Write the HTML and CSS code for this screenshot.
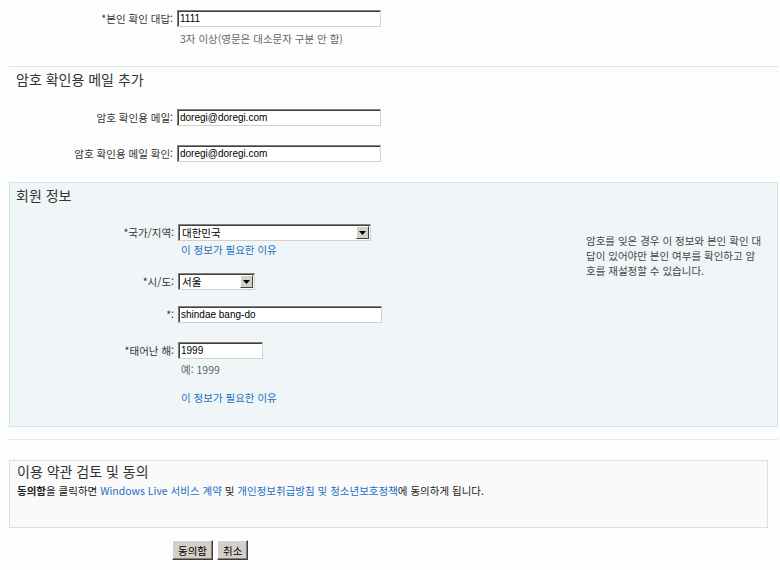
FILE: index.html
```html
<!DOCTYPE html>
<html lang="ko">
<head>
    <meta charset="UTF-8">
    <title>회원 가입</title>
    <link rel="stylesheet" href="styles.css">
</head>
<body>
    <div class="page">
        <div class="row">
            <label for="answer">*본인 확인 대답:</label>
            <div class="field">
                <input type="text" id="answer" class="text-input" value="1111">
                <div class="hint">3자 이상(영문은 대소문자 구분 안 함)</div>
            </div>
        </div>

        <hr class="rule">

        <h2 class="section-title outside">암호 확인용 메일 추가</h2>
        <div class="row mail">
            <label for="altMail">암호 확인용 메일:</label>
            <div class="field">
                <input type="text" id="altMail" class="text-input" value="doregi@doregi.com">
            </div>
        </div>
        <div class="row mail-confirm">
            <label for="altMail2">암호 확인용 메일 확인:</label>
            <div class="field">
                <input type="text" id="altMail2" class="text-input" value="doregi@doregi.com">
            </div>
        </div>

        <div class="panel member">
            <h2 class="section-title">회원 정보</h2>
            <div class="member-body">
                <div class="member-form">
                    <div class="row">
                        <label>*국가/지역:</label>
                        <div class="field">
                            <div class="select wide">
                                <span>대한민국</span>
                                <span class="arrow"><svg width="7" height="4" viewBox="0 0 7 4"><path d="M0 0h7L3.5 4z" fill="#000"/></svg></span>
                            </div>
                            <a href="#" class="why">이 정보가 필요한 이유</a>
                        </div>
                    </div>
                    <div class="row city">
                        <label>*시/도:</label>
                        <div class="field">
                            <div class="select narrow">
                                <span>서울</span>
                                <span class="arrow"><svg width="7" height="4" viewBox="0 0 7 4"><path d="M0 0h7L3.5 4z" fill="#000"/></svg></span>
                            </div>
                        </div>
                    </div>
                    <div class="row street">
                        <label for="street">*:</label>
                        <div class="field">
                            <input type="text" id="street" class="text-input" value="shindae bang-do">
                        </div>
                    </div>
                    <div class="row year">
                        <label for="birthYear">*태어난 해:</label>
                        <div class="field">
                            <input type="text" id="birthYear" class="text-input short" value="1999">
                            <div class="hint example">예: 1999</div>
                            <a href="#" class="why later">이 정보가 필요한 이유</a>
                        </div>
                    </div>
                </div>
                <p class="note">암호를 잊은 경우 이 정보와 본인 확인 대<br>답이 있어야만 본인 여부를 확인하고 암<br>호를 재설정할 수 있습니다.</p>
            </div>
        </div>

        <hr class="rule dotted">

        <div class="panel terms">
            <h2 class="section-title">이용 약관 검토 및 동의</h2>
            <p class="terms-text"><b>동의함</b>을 클릭하면 <a href="#">Windows Live 서비스 계약</a> 및 <a href="#">개인정보취급방침 및 청소년보호정책</a>에 동의하게 됩니다.</p>
        </div>

        <div class="actions">
            <button type="submit" class="btn">동의함</button>
            <button type="button" class="btn">취소</button>
        </div>
    </div>
</body>
</html>
```

FILE: styles.css
```css
body {
    margin: 0;
    background-color: #fdfdfd;
    font-family: "Noto Sans CJK KR", "Liberation Sans", sans-serif;
    font-size: 10.5px;
    color: #333;
}
.page {
    padding: 10px 2px 0 9px;
}
.row {
    display: grid;
    grid-template-columns: 164px 1fr;
    column-gap: 4px;
    align-items: start;
}
.row label {
    text-align: right;
    line-height: 17px;
}
.text-input {
    display: block;
    width: 204px;
    height: 17px;
    box-sizing: border-box;
    margin: 0;
    padding: 0 2px;
    border: 1px solid;
    border-color: #808080 #d4d0c8 #d4d0c8 #808080;
    box-shadow: inset 1px 1px 0 #404040;
    background-color: white;
    font-family: "Liberation Sans", Arial, sans-serif;
    font-size: 10px;
    color: #000;
    outline: none;
}
.text-input.short {
    width: 85px;
}
.hint {
    color: #666;
    line-height: 14px;
    margin-top: 5px;
    padding-left: 3px;
}
.hint.example {
    margin-top: 4px;
}
.rule {
    margin: 20px 0 0;
    border: none;
    border-top: 1px solid #d4e8f2;
}
.rule.dotted {
    margin-top: 12px;
    border-top: 1px dotted #c6d4e4;
}
.section-title {
    margin: 3px 0 0;
    font-size: 14px;
    font-weight: normal;
    line-height: 18px;
    color: #333;
}
.section-title.outside {
    padding-left: 7px;
}
.mail {
    margin-top: 21px;
}
.mail-confirm {
    margin-top: 19px;
}
.panel {
    border: 1px solid #cde5ef;
    padding: 0 0 0 6px;
}
.member {
    margin-top: 20px;
    background-color: #f0f6f8;
    padding-bottom: 21px;
}
.member .row {
    margin-left: -6px;
}
.member-body {
    display: flex;
    padding-top: 20px;
}
.member-form {
    width: 570px;
}
.city {
    margin-top: 16px;
}
.street {
    margin-top: 16px;
}
.year {
    margin-top: 19px;
}
.select {
    display: flex;
    align-items: center;
    justify-content: space-between;
    height: 17px;
    box-sizing: border-box;
    padding-left: 3px;
    border: 1px solid;
    border-color: #808080 #d4d0c8 #d4d0c8 #808080;
    box-shadow: inset 1px 1px 0 #404040;
    background-color: white;
    color: #000;
}
.select.wide {
    width: 193px;
}
.select.narrow {
    width: 77px;
}
.select .arrow {
    display: flex;
    align-items: center;
    justify-content: center;
    width: 13px;
    height: 13px;
    box-sizing: border-box;
    margin-right: 1px;
    background-color: #d4d0c8;
    border: 1px solid;
    border-color: #fff #404040 #404040 #fff;
}
.why {
    display: block;
    width: max-content;
    margin-top: 2px;
    line-height: 14px;
    padding-left: 3px;
    color: #1a6fc4;
    text-decoration: none;
}
.why.later {
    margin-top: 14px;
}
.note {
    margin: 9px 0 0;
    line-height: 15px;
    white-space: nowrap;
    color: #444;
}
.terms {
    margin: 20px 10px 0 0;
    padding: 1px 0 29px 7px;
    background-color: #fafafa;
    border-color: #d4e2ef;
}
.terms .section-title {
    margin: 0;
}
.terms-text {
    margin: 4px 0 0;
    line-height: 14px;
    color: #222;
}
.terms-text a {
    color: #1a6fc4;
    text-decoration: none;
}
.actions {
    display: flex;
    gap: 4px;
    margin-top: 12px;
    padding-left: 163px;
}
.btn {
    height: 20px;
    padding: 0 5px;
    background-color: #d4d0c8;
    border: 1px solid;
    border-color: #fff #404040 #404040 #fff;
    box-shadow: inset -1px -1px 0 #808080;
    font-family: "Noto Sans CJK KR", "Liberation Sans", sans-serif;
    font-size: 10.5px;
    color: #000;
}
```
